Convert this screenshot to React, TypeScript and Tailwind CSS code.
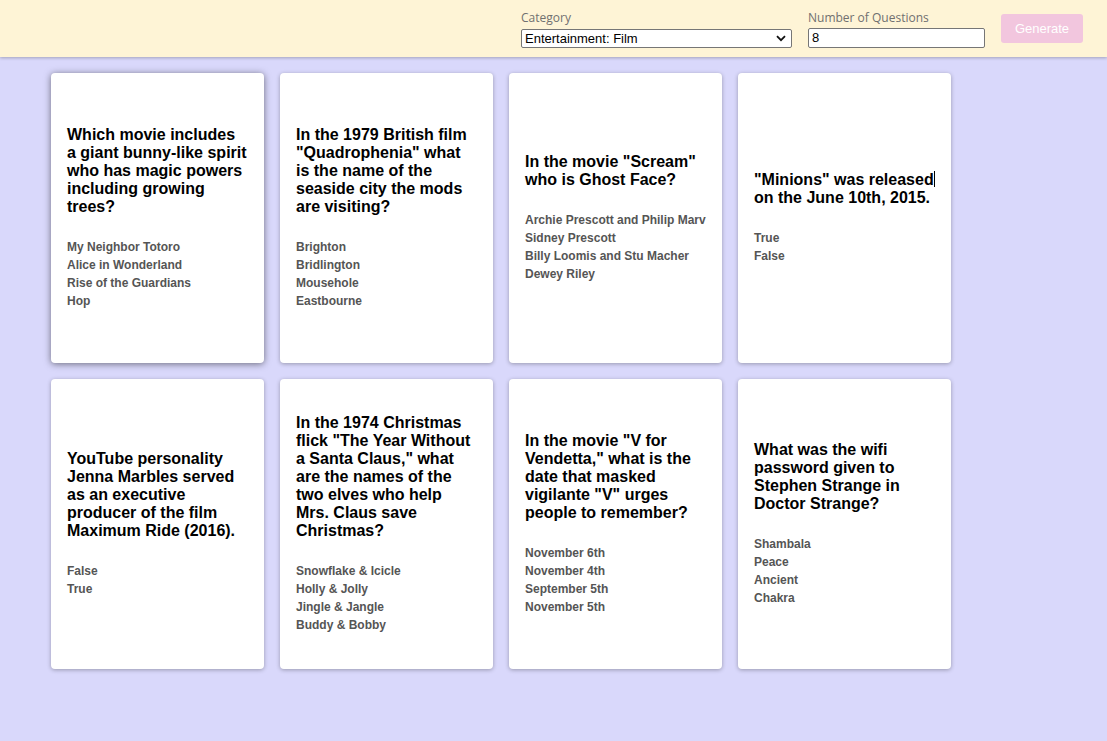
import React from "react";

const cards: { q: React.ReactNode; a: string[]; hover?: boolean }[] = [
  {
    q: "Which movie includes a giant bunny-like spirit who has magic powers including growing trees?",
    a: ["My Neighbor Totoro", "Alice in Wonderland", "Rise of the Guardians", "Hop"],
    hover: true,
  },
  {
    q: 'In the 1979 British film "Quadrophenia" what is the name of the seaside city the mods are visiting?',
    a: ["Brighton", "Bridlington", "Mousehole", "Eastbourne"],
  },
  {
    q: 'In the movie "Scream" who is Ghost Face?',
    a: ["Archie Prescott and Philip Marv", "Sidney Prescott", "Billy Loomis and Stu Macher", "Dewey Riley"],
  },
  {
    q: (
      <>
        "Minions" was released
        <span className="inline-block w-px h-[16px] bg-black align-[-2px]" />
        {" "}on the June 10th, 2015.
      </>
    ),
    a: ["True", "False"],
  },
  {
    q: "YouTube personality Jenna Marbles served as an executive producer of the film Maximum Ride (2016).",
    a: ["False", "True"],
  },
  {
    q: 'In the 1974 Christmas flick "The Year Without a Santa Claus," what are the names of the two elves who help Mrs. Claus save Christmas?',
    a: ["Snowflake & Icicle", "Holly & Jolly", "Jingle & Jangle", "Buddy & Bobby"],
  },
  {
    q: 'In the movie "V for Vendetta," what is the date that masked vigilante "V" urges people to remember?',
    a: ["November 6th", "November 4th", "September 5th", "November 5th"],
  },
  {
    q: "What was the wifi password given to Stephen Strange in Doctor Strange?",
    a: ["Shambala", "Peace", "Ancient", "Chakra"],
  },
];

export default function App() {
  return (
    <div className="min-h-[741px] bg-[#d9d8fb]" style={{ fontFamily: '"Liberation Sans", Arial, sans-serif' }}>
      <header className="h-[57px] bg-[#fef4d6] shadow-[0_1px_3px_rgba(0,0,0,0.25)] flex justify-end items-start pr-[24px] relative z-10">
        <div className="flex flex-col mt-[10px] mr-[16px]">
          <label className="text-[12px] leading-[16px] text-[#707070] mb-[3px]" style={{ fontFamily: '"Open Sans", "Noto Sans", sans-serif' }}>
            Category
          </label>
          <div className="relative w-[271px] h-[19px] border border-[#767676] rounded-[2px] bg-white flex items-center">
            <span className="text-[13px] text-black pl-[3px] leading-[17px]">Entertainment: Film</span>
            <svg className="absolute right-[5px] top-[5px]" width="10" height="7" viewBox="0 0 10 7">
              <path d="M1 1.2 L5 5.2 L9 1.2" fill="none" stroke="#111" strokeWidth="1.8" />
            </svg>
          </div>
        </div>
        <div className="flex flex-col mt-[10px] mr-[16px]">
          <label className="text-[12px] leading-[16px] text-[#707070] mb-[2px]" style={{ fontFamily: '"Open Sans", "Noto Sans", sans-serif' }}>
            Number of Questions
          </label>
          <div className="w-[177px] h-[20px] border border-[#767676] rounded-[2px] bg-white flex items-center">
            <span className="text-[13px] text-black pl-[3px]">8</span>
          </div>
        </div>
        <button className="mt-[14px] w-[82px] h-[29px] rounded-[3px] bg-[#f2c6de] text-white text-[13px]">
          Generate
        </button>
      </header>
      <main className="pt-[16px] pl-[51px]">
        <div className="grid grid-cols-[repeat(4,213px)] gap-x-[16px] gap-y-[16px]">
          {cards.map((c, i) => (
            <div
              key={i}
              className={`h-[290px] bg-white rounded-[4px] px-[16px] flex flex-col justify-center ${
                c.hover
                  ? "shadow-[0_1px_7px_rgba(0,0,0,0.5)]"
                  : "shadow-[0_1px_4px_rgba(0,0,0,0.3)]"
              }`}
            >
              <div className="text-[16px] leading-[18px] font-bold text-black">{c.q}</div>
              <div className="mt-[22px] flex flex-col">
                {c.a.map((a) => (
                  <div key={a} className="text-[12px] leading-[18px] font-bold text-[#555]">
                    {a}
                  </div>
                ))}
              </div>
            </div>
          ))}
        </div>
      </main>
    </div>
  );
}
